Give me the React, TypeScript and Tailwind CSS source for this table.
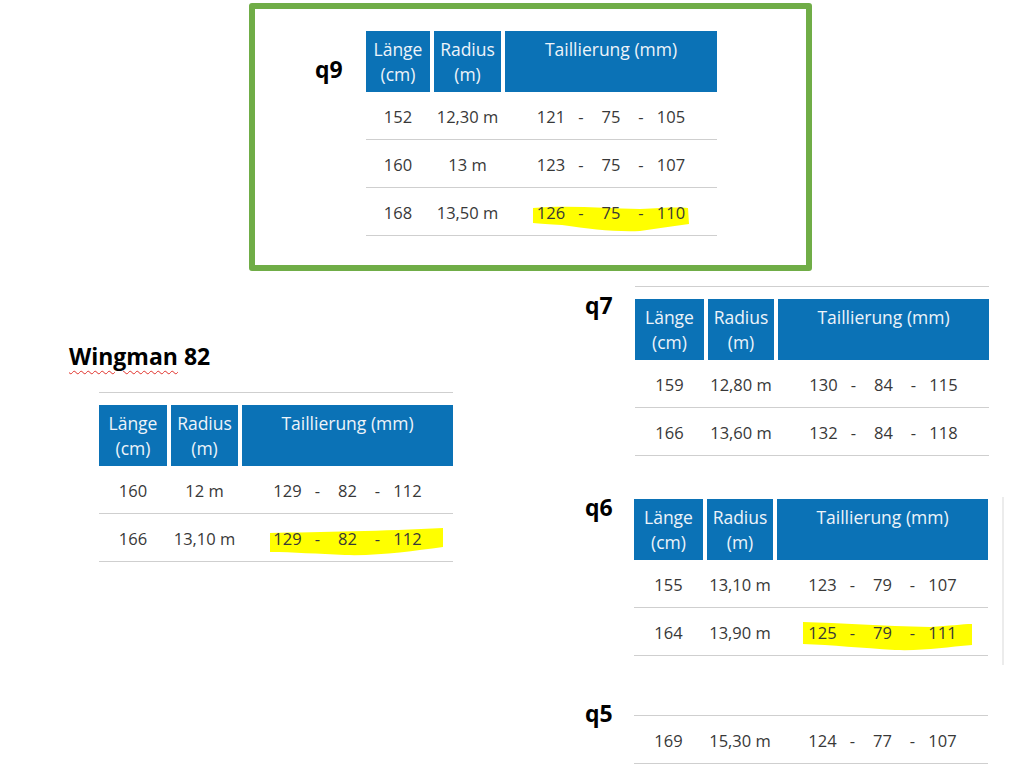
import React from "react";

type Row = { len: string; rad: string; t: [string, string, string] };

const body = { fontFamily: '"Open Sans", "Noto Sans", sans-serif' };
const bold = { fontFamily: '"Open Sans", "Noto Sans", sans-serif' };

function Taill({ t }: { t: [string, string, string] }) {
  return (
    <div className="flex justify-center">
      <span className="w-[32px] text-center">{t[0]}</span>
      <span className="w-[28px] text-center">-</span>
      <span className="w-[32px] text-center">{t[1]}</span>
      <span className="w-[28px] text-center">-</span>
      <span className="w-[32px] text-center">{t[2]}</span>
    </div>
  );
}

function Table({
  cols,
  rows,
  header = true,
  topLine = false,
}: {
  cols: [string, string, string];
  rows: Row[];
  header?: boolean;
  topLine?: boolean;
}) {
  return (
    <div className="flex flex-col" style={body}>
      {topLine && <div className="h-px bg-[#cfcfcf] w-full" />}
      {topLine && header && <div className="h-[12px]" />}
      {header && (
        <div className="flex gap-[4px] h-[61px] text-[17.5px] leading-[25px] text-[#eef4fa]">
          <div className={`${cols[0]} bg-[#0b72b6] flex flex-col items-center pt-[6px]`}>
            <span>Länge</span>
            <span>(cm)</span>
          </div>
          <div className={`${cols[1]} bg-[#0b72b6] flex flex-col items-center pt-[6px]`}>
            <span>Radius</span>
            <span>(m)</span>
          </div>
          <div className={`${cols[2]} bg-[#0b72b6] flex flex-col items-center pt-[6px]`}>
            <span>Taillierung (mm)</span>
          </div>
        </div>
      )}
      {rows.map((r, i) => (
        <div
          key={i}
          className="flex gap-[4px] h-[48px] items-center pt-[4px] border-b border-[#cfcfcf] text-[16.5px] text-[#383838]"
        >
          <div className={`${cols[0]} text-center`}>{r.len}</div>
          <div className={`${cols[1]} text-center`}>{r.rad}</div>
          <div className={cols[2]}>
            <Taill t={r.t} />
          </div>
        </div>
      ))}
    </div>
  );
}

function Label({ children }: { children: React.ReactNode }) {
  return (
    <div className="text-[23px] leading-[22px] font-bold text-black" style={bold}>
      {children}
    </div>
  );
}

export default function App() {
  return (
    <div className="relative w-[1014px] h-[778px] bg-white overflow-hidden">
      {/* highlighter strokes */}
      <svg className="absolute inset-0" width="1014" height="778" viewBox="0 0 1014 778">
        <path
          d="M533,208 C565,205 605,208 640,209 C662,208 676,207 688,208 L689,224 C672,226 656,229 640,231 C614,232 590,229 562,225 C549,224 540,224 533,223 Z"
          fill="#ffff00"
        />
        <path
          d="M270,533 C320,532 385,531 443,528 L443,547 C412,551 380,556 345,555 C318,554 293,552 270,552 Z"
          fill="#ffff00"
        />
        <path
          d="M803,622 C840,623 882,626 930,627 C950,626 962,624 972,624 L972,645 C946,647 925,651 895,650 C862,648 832,645 803,644 Z"
          fill="#ffff00"
        />
      </svg>

      {/* q9 green box */}
      <div className="absolute left-[249px] top-[3px] w-[563px] h-[268px] border-[6px] border-[#70ad47] rounded-[3px] pl-[60px] pt-[22px] flex">
        <div className="w-[51px] mt-[27px]">
          <Label>q9</Label>
        </div>
        <Table
          cols={["w-[64px]", "w-[67px]", "w-[212px]"]}
          rows={[
            { len: "152", rad: "12,30 m", t: ["121", "75", "105"] },
            { len: "160", rad: "13 m", t: ["123", "75", "107"] },
            { len: "168", rad: "13,50 m", t: ["126", "75", "110"] },
          ]}
        />
      </div>

      {/* Wingman 82 */}
      <div className="absolute left-[69px] top-[345px] flex flex-col">
        <div className="text-[23px] leading-[22px] font-bold text-black" style={bold}>
          <span className="underline decoration-wavy decoration-[#e0302a] decoration-1 underline-offset-[5px]">
            Wingman
          </span>{" "}
          82
        </div>
        <div className="ml-[30px] mt-[25px]">
          <Table
            topLine
            cols={["w-[68px]", "w-[67px]", "w-[211px]"]}
            rows={[
              { len: "160", rad: "12 m", t: ["129", "82", "112"] },
              { len: "166", rad: "13,10 m", t: ["129", "82", "112"] },
            ]}
          />
        </div>
      </div>

      {/* q7 */}
      <div className="absolute left-[585px] top-[286px] flex">
        <div className="w-[50px] mt-[8px]">
          <Label>q7</Label>
        </div>
        <Table
          topLine
          cols={["w-[69px]", "w-[66px]", "w-[211px]"]}
          rows={[
            { len: "159", rad: "12,80 m", t: ["130", "84", "115"] },
            { len: "166", rad: "13,60 m", t: ["132", "84", "118"] },
          ]}
        />
      </div>

      {/* q6 */}
      <div className="absolute left-[585px] top-[496px] flex">
        <div className="w-[49px]">
          <Label>q6</Label>
        </div>
        <div className="mt-[3px]">
          <Table
            cols={["w-[69px]", "w-[66px]", "w-[211px]"]}
            rows={[
              { len: "155", rad: "13,10 m", t: ["123", "79", "107"] },
              { len: "164", rad: "13,90 m", t: ["125", "79", "111"] },
            ]}
          />
        </div>
      </div>
      <div className="absolute left-[1002px] top-[497px] w-[2px] h-[168px] bg-[#ececec]" />

      {/* q5 */}
      <div className="absolute left-[585px] top-[702px] flex">
        <div className="w-[49px]">
          <Label>q5</Label>
        </div>
        <div className="mt-[13px]">
          <Table
            topLine
            header={false}
            cols={["w-[69px]", "w-[66px]", "w-[211px]"]}
            rows={[{ len: "169", rad: "15,30 m", t: ["124", "77", "107"] }]}
          />
        </div>
      </div>
    </div>
  );
}
